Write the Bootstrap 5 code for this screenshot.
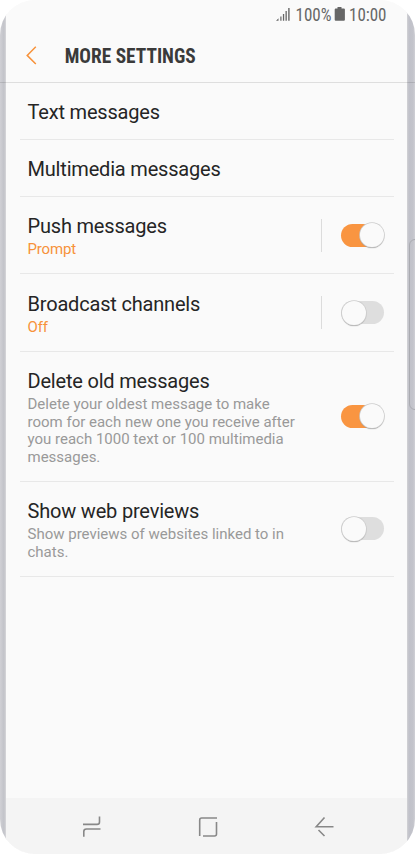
<!DOCTYPE html>
<html lang="en">
<head>
<meta charset="utf-8">
<meta name="viewport" content="width=device-width, initial-scale=1">
<title>More settings</title>
<link href="https://cdn.jsdelivr.net/npm/bootstrap@5.3.0/dist/css/bootstrap.min.css" rel="stylesheet">
<style>
body{background:#fff;font-family:Roboto,"Liberation Sans",sans-serif;overflow:hidden}
.phone{width:415px;height:854px;border-radius:35px;background:linear-gradient(90deg,#d0d0d5 0,#c2c3c9 4px,#d7d7da 6px,#fafafa 7px,#fafafa 406px,#d2d2d5 407px,#c0c1c9 409px,#c3c4cb 413px,#d0d0d5 415px);padding:0 8px 0 6px}
.screen{background:#fafafa;height:854px}
.edge-button{left:409px;top:239px;width:12px;height:171px;border:1px solid #a9aab0;border-radius:6px}
.status{height:30px;padding-right:20px}
.title-bar{height:52px;padding-left:20px}
.header-rule{height:1px;margin:0 -8px 0 -6px;background:rgba(0,0,0,.11)}
.settings{padding:0 13px 0 14px}
.setting{border-bottom:1px solid #e8e8e8;padding:0 10px 0 7.5px;height:57px}
.setting.plain{padding-top:2px}
.setting.two{height:77.4px}
.setting.long{height:130.2px}
.setting.mid{height:95px}
.label-block{padding-top:3px}
.name{font-size:20px;line-height:24px;color:#252525;white-space:nowrap;letter-spacing:-.19px}
.note{font-size:15px;line-height:17.7px;margin-top:3px;color:#999;white-space:nowrap}
.note.accent{color:#f7923a;letter-spacing:-.15px}
.split{width:1px;height:33px;background:#dcdcdc;margin-right:20px}
.switch{width:43px;height:23px;border-radius:12px;background:#dedede}
.split + .switch{margin-left:-1px}
.switch.on{background:#f99541;justify-content:flex-end}
.knob{width:24px;height:24px;border-radius:50%;background:#fafafa;box-shadow:0 0 0 .8px #ccc,0 1px 1px #888;margin:0 0 0 .5px;flex:none}
.on .knob{margin:0 .5px 0 0}
.softkeys{height:56px;background:#f4f4f4}
svg{display:block;overflow:visible}
.narrow{font-family:"Roboto Condensed",Roboto,sans-serif}
</style>
</head>
<body>
<div class="phone position-relative overflow-hidden">
  <div class="edge-button position-absolute"></div>
  <main class="screen d-flex flex-column">
    <div class="status d-flex justify-content-end">
      <svg width="111" height="30" fill="#666">
        <path d="M0 20.700 2.500 18.300V20.700ZM4.300 16.500h1.200v4.200H4.300ZM6.900 14h1.300v6.700H6.900ZM9.500 11h1.300v9.700H9.500ZM12.200 8h1.400v12.700h-1.400Z"/>
        <path d="M61.500 7h4v1.500h2.400q1 0 1 1v10.200q0 1-1 1h-8.200q-1 0-1-1V9.500q0-1 1-1h1.800Z"/>
        <text class="narrow" x="19.500" y="20.700" font-size="17.500" textLength="36" lengthAdjust="spacingAndGlyphs">100%</text>
        <text class="narrow" x="73" y="20.700" font-size="17.500" textLength="37.500" lengthAdjust="spacingAndGlyphs">10:00</text>
      </svg>
    </div>
    <header class="title-bar d-flex align-items-start">
      <svg width="170" height="52">
        <path d="M9.800 16.800 1.200 25.400l8.600 8.600" fill="none" stroke="#f7923a" stroke-width="1.500"/>
        <text class="narrow" x="38.700" y="33" font-size="19.500" font-weight="700" fill="#3a3a3a" textLength="131" lengthAdjust="spacingAndGlyphs">MORE SETTINGS</text>
      </svg>
    </header>
    <div class="header-rule"></div>
    <section class="settings flex-grow-1">
      <div class="setting plain d-flex align-items-center"><div class="name">Text messages</div></div>
      <div class="setting plain d-flex align-items-center"><div class="name">Multimedia messages</div></div>
      <div class="setting two d-flex align-items-center">
        <div class="label-block me-auto"><div class="name">Push messages</div><div class="note accent">Prompt</div></div>
        <div class="split"></div><div class="switch on d-flex align-items-center"><div class="knob"></div></div>
      </div>
      <div class="setting two d-flex align-items-center">
        <div class="label-block me-auto"><div class="name">Broadcast channels</div><div class="note accent">Off</div></div>
        <div class="split"></div><div class="switch d-flex align-items-center"><div class="knob"></div></div>
      </div>
      <div class="setting long d-flex align-items-center">
        <div class="label-block me-auto"><div class="name">Delete old messages</div><div class="note">Delete your oldest message to make<br>room for each new one you receive after<br>you reach 1000 text or 100 multimedia<br>messages.</div></div>
        <div class="switch on d-flex align-items-center"><div class="knob"></div></div>
      </div>
      <div class="setting mid d-flex align-items-center">
        <div class="label-block me-auto"><div class="name">Show web previews</div><div class="note">Show previews of websites linked to in<br>chats.</div></div>
        <div class="switch d-flex align-items-center"><div class="knob"></div></div>
      </div>
    </section>
    <nav class="softkeys">
      <svg width="401" height="56" fill="none" stroke="#888" stroke-width="1.600">
        <path d="M77 26.400h14q2.500 0 2.500-2.500v-5.400M94.500 31h-14q-2.700 0-2.700 2.500v5.300"/>
        <path d="M193.700 38V22q0-2 2-2H211M210.500 24v12q0 2-2 2H197"/>
        <path d="M327.500 28.800h-17.300l8.300-9.300M312.500 32l6 6"/>
      </svg>
    </nav>
  </main>
</div>
<script src="https://cdn.jsdelivr.net/npm/bootstrap@5.3.0/dist/js/bootstrap.bundle.min.js"></script>
</body>
</html>
